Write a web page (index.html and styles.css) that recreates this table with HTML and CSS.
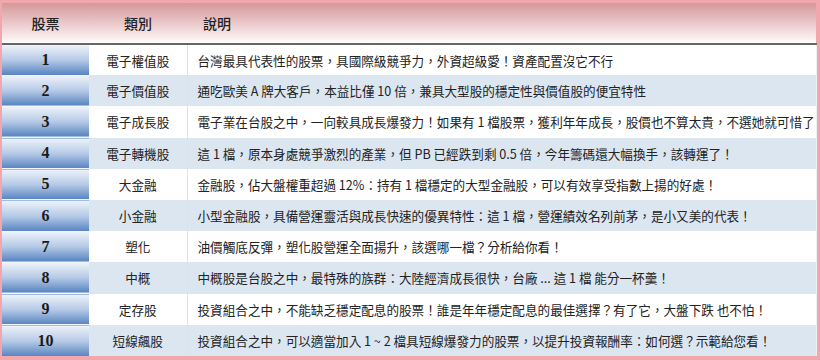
FILE: index.html
```html
<!DOCTYPE html>
<html lang="zh-Hant">
<head>
<meta charset="utf-8">
<title>股票類別</title>
<link rel="stylesheet" href="styles.css">
</head>
<body>
<div class="frame">
  <table class="stocks">
    <colgroup>
      <col class="c-num">
      <col class="c-cat">
      <col class="c-desc">
    </colgroup>
    <thead>
      <tr>
        <th class="h-num">股票</th>
        <th class="h-cat">類別</th>
        <th class="h-desc">說明</th>
      </tr>
    </thead>
    <tbody>
      <tr class="odd"><td class="num">1</td><td class="cat">電子權值股</td><td class="desc">台灣最具代表性的股票，具國際級競爭力，外資超級愛！資產配置沒它不行</td></tr>
      <tr class="even"><td class="num">2</td><td class="cat">電子價值股</td><td class="desc">通吃歐美 A 牌大客戶，本益比僅 10 倍，兼具大型股的穩定性與價值股的便宜特性</td></tr>
      <tr class="odd"><td class="num">3</td><td class="cat">電子成長股</td><td class="desc">電子業在台股之中，一向較具成長爆發力！如果有 1 檔股票，獲利年年成長，股價也不算太貴，不選她就可惜了</td></tr>
      <tr class="even"><td class="num">4</td><td class="cat">電子轉機股</td><td class="desc">這 1 檔，原本身處競爭激烈的產業，但 PB 已經跌到剩 0.5 倍，今年籌碼還大幅換手，該轉運了！</td></tr>
      <tr class="odd"><td class="num">5</td><td class="cat">大金融</td><td class="desc">金融股，佔大盤權重超過 12%：持有 1 檔穩定的大型金融股，可以有效享受指數上揚的好處！</td></tr>
      <tr class="even"><td class="num">6</td><td class="cat">小金融</td><td class="desc">小型金融股，具備營運靈活與成長快速的優異特性：這 1 檔，營運績效名列前茅，是小又美的代表！</td></tr>
      <tr class="odd"><td class="num">7</td><td class="cat">塑化</td><td class="desc">油價觸底反彈，塑化股營運全面揚升，該選哪一檔？分析給你看！</td></tr>
      <tr class="even"><td class="num">8</td><td class="cat">中概</td><td class="desc">中概股是台股之中，最特殊的族群：大陸經濟成長很快，台廠 ... 這 1 檔 能分一杯羹！</td></tr>
      <tr class="odd"><td class="num">9</td><td class="cat">定存股</td><td class="desc">投資組合之中，不能缺乏穩定配息的股票！誰是年年穩定配息的最佳選擇？有了它，大盤下跌 也不怕！</td></tr>
      <tr class="even"><td class="num">10</td><td class="cat">短線飆股</td><td class="desc">投資組合之中，可以適當加入 1 ~ 2 檔具短線爆發力的股票，以提升投資報酬率：如何選？示範給您看！</td></tr>
    </tbody>
  </table>
</div>
</body>
</html>
```

FILE: styles.css
```css
html, body {
  margin: 0;
  padding: 0;
}

body {
  background: #f2a7ae;
  width: 820px;
  height: 360px;
  overflow: hidden;
  font-family: "Noto Sans CJK TC", "Noto Sans", sans-serif;
  color: #222;
}

.frame {
  padding: 3px 4px 3px 2px;
}

.stocks {
  width: 814px;
  border-collapse: collapse;
  table-layout: fixed;
}

.c-num { width: 87px; }
.c-cat { width: 98px; }
.c-desc { width: 629px; }

.stocks thead th {
  height: 40px;
  padding: 0;
  background: linear-gradient(#d6979a, #fbf0f0 90%, #ffffff);
  border-bottom: 2px solid #666;
  font-size: 14px;
  font-weight: 500;
  color: #222;
}

.h-num, .h-cat { text-align: center; }
.h-desc { text-align: left; padding-left: 16px !important; }

.stocks tbody tr {
  height: 31.2px;
}

.stocks td {
  padding: 0;
  font-size: 12.6px;
  white-space: nowrap;
  overflow: hidden;
}

.odd td { background: #ffffff; }
.even td { background: #dce6f1; }

.stocks td.num {
  background: linear-gradient(#eef3fa, #b6cae6 50%, #5683c1);
  border-top: 1px solid #f2f6fb;
  text-align: center;
  font-family: "Liberation Serif", serif;
  font-weight: bold;
  font-size: 16px;
  color: #1a1a1a;
}

.cat {
  text-align: center;
  border-right: 1px solid #e2e2e2;
}

.desc {
  padding-left: 10px !important;
  border-right: 1px solid #eef2f7;
}
```
